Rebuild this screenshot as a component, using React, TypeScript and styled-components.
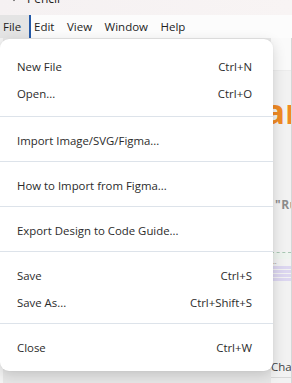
import styled, { createGlobalStyle } from 'styled-components';

const GlobalStyle = createGlobalStyle`
  html, body {
    margin: 0;
    padding: 0;
  }
  body {
    font-family: "Open Sans", "Noto Sans", sans-serif;
    background: #ffffff;
    color: #2b2b2b;
  }
`;

type MenuItem = { label: string; shortcut?: string };

const fileMenu: MenuItem[][] = [
  [
    { label: 'New File', shortcut: 'Ctrl+N' },
    { label: 'Open...', shortcut: 'Ctrl+O' },
  ],
  [{ label: 'Import Image/SVG/Figma...' }],
  [{ label: 'How to Import from Figma...' }],
  [{ label: 'Export Design to Code Guide...' }],
  [
    { label: 'Save', shortcut: 'Ctrl+S' },
    { label: 'Save As...', shortcut: 'Ctrl+Shift+S' },
  ],
  [{ label: 'Close', shortcut: 'Ctrl+W' }],
];

const menuBarItems = ['File', 'Edit', 'View', 'Window', 'Help'];

export default function App() {
  return (
    <>
      <GlobalStyle />
      <Window>
        <TitleBar>
          <AppIcon viewBox="0 0 10 10">
            <path d="M2 0 L5 4 L8 0" fill="none" stroke="#333" strokeWidth="1.6" />
          </AppIcon>
          <TitleText>Pencil</TitleText>
        </TitleBar>
        <MenuBar>
          {menuBarItems.map((item, i) => (
            <MenuBarButton key={item} $active={i === 0} $afterActive={i === 1}>
              {item}
            </MenuBarButton>
          ))}
        </MenuBar>
        <Workspace>
          <LeftPane />
          <Canvas>
            <CanvasTop />
            <CanvasBody>
              <Heading>Start</Heading>
              <Quote>"Run a</Quote>
              <DashedRule />
              <CodeLine>..</CodeLine>
              <CodeBlock>
                <CodeRow />
                <CodeRow />
                <CodeRow />
                <CodeRow />
              </CodeBlock>
            </CanvasBody>
            <ChatTab>Chat</ChatTab>
          </Canvas>
        </Workspace>

        <Dropdown>
          {fileMenu.map((group, gi) => (
            <Group key={gi} $index={gi}>
              {group.map((item) => (
                <Row key={item.label}>
                  <span>{item.label}</span>
                  {item.shortcut && <span>{item.shortcut}</span>}
                </Row>
              ))}
            </Group>
          ))}
        </Dropdown>
      </Window>
    </>
  );
}

const Window = styled.div`
  position: relative;
  width: 292px;
  height: 383px;
  overflow: hidden;
  display: flex;
  flex-direction: column;
`;

const TitleBar = styled.div`
  height: 15px;
  flex-shrink: 0;
  display: flex;
  align-items: flex-start;
  gap: 9px;
  padding-left: 10px;
  background: linear-gradient(90deg, #f5f1f2, #f8f4f4);
  overflow: hidden;
`;

const AppIcon = styled.svg`
  width: 8px;
  height: 8px;
  margin-top: -3px;
`;

const TitleText = styled.span`
  font-size: 12px;
  line-height: 12px;
  margin-top: -7px;
  color: #222;
`;

const MenuBar = styled.div`
  height: 23px;
  flex-shrink: 0;
  display: flex;
  align-items: stretch;
  background: #fcfcfc;
`;

const MenuBarButton = styled.div<{ $active?: boolean; $afterActive?: boolean }>`
  display: flex;
  align-items: center;
  padding: 0 6px 0 ${(p) => (p.$afterActive ? '3px' : '6.5px')};
  font-size: 11.5px;
  color: #1e1e1e;
  ${(p) =>
    p.$active &&
    `
    padding: 0 0 0 3px;
    width: 26px;
    background: #e4e4e4;
    border-right: 2px solid #2459a8;
  `}
`;

const Workspace = styled.div`
  flex: 1;
  display: flex;
  min-height: 0;
`;

const LeftPane = styled.div`
  width: 271px;
  flex-shrink: 0;
  box-sizing: border-box;
  background: #e7e7e7;
  border-left: 3px solid #f4f4f4;
`;

const Canvas = styled.div`
  flex: 1;
  display: flex;
  flex-direction: column;
  background: #f2f2f2;
  border-right: 1px solid #d6d6d6;
  overflow: hidden;
`;

const CanvasTop = styled.div`
  height: 32px;
  flex-shrink: 0;
  background: #fafafa;
  border-bottom: 1px solid #ececec;
`;

const CanvasBody = styled.div`
  flex: 1;
  display: flex;
  flex-direction: column;
  padding-top: 20px;
  white-space: nowrap;
`;

/* only the tail of the heading peeks out from behind the open menu */
const Heading = styled.div`
  font-size: 34px;
  font-weight: 700;
  line-height: 40px;
  color: #f08a24;
  margin-left: -40px;
`;

const Quote = styled.div`
  margin-top: 65px;
  padding-left: 4px;
  font-size: 12px;
  font-weight: 700;
  color: #8c8c8c;
  letter-spacing: 0.5px;
`;

const DashedRule = styled.div`
  margin-top: 39px;
  border-top: 1px dashed #a9c7b4;
  background: #eef4ef;
  height: 6px;
`;

const CodeLine = styled.div`
  font-size: 7px;
  line-height: 6px;
  color: #888;
  padding-left: 2px;
`;

const CodeBlock = styled.div`
  display: flex;
  flex-direction: column;
  gap: 1px;
  margin-top: 1px;
`;

const CodeRow = styled.div`
  height: 3px;
  background: #dcd6f0;
`;

const ChatTab = styled.div`
  height: 22px;
  flex-shrink: 0;
  display: flex;
  align-items: center;
  font-size: 11.5px;
  color: #444;
  border-bottom: 1px solid #d8d8d8;
  margin-bottom: 5px;
`;

const Dropdown = styled.div`
  position: absolute;
  top: 39px;
  left: 0;
  width: 273px;
  padding: 14px 0 10px;
  background: #ffffff;
  border-radius: 9px;
  box-shadow: 0 4px 14px rgba(0, 0, 0, 0.16), 0 0 2px rgba(0, 0, 0, 0.06);
  box-sizing: border-box;
`;

const Group = styled.div<{ $index: number }>`
  padding-bottom: ${(p) => (p.$index === 0 ? '2px' : '0')};
  ${(p) =>
    p.$index > 0 &&
    `
    border-top: 1px solid #dde3ea;
    margin-top: 7px;
    padding-top: 10px;
  `}
`;

const Row = styled.div`
  height: 27px;
  display: flex;
  align-items: center;
  justify-content: space-between;
  padding: 0 21px 0 17px;
  font-size: 11.4px;
  color: #2b2b2b;
`;
